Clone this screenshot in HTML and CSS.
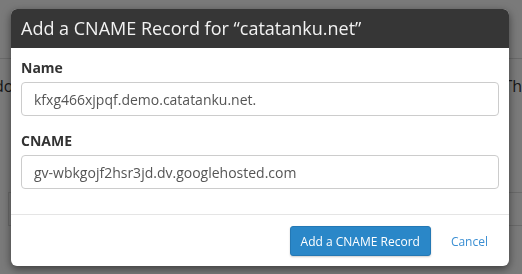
FILE: index.html
```html
<!DOCTYPE html>
<html>
  <head>
    <meta charset="utf-8">
    <title>Add a CNAME Record</title>
    <link rel="stylesheet" href="styles.css">
  </head>
  <body>
    <div class="page">
      <div class="page-top"></div>
      <div class="page-row">
        <span class="page-text left">do</span>
        <span class="page-text right">Th</span>
      </div>
      <div class="page-table"></div>
    </div>
    <div id="overlay"></div>
    <div id="modal">
      <div class="modal-header">
        <h2>Add a CNAME Record for “catatanku.net”</h2>
      </div>
      <div class="modal-body">
        <div class="form-group">
          <label for="name">Name</label>
          <input id="name" type="text" value="kfxg466xjpqf.demo.catatanku.net.">
        </div>
        <div class="form-group">
          <label for="cname">CNAME</label>
          <input id="cname" type="text" value="gv-wbkgojf2hsr3jd.dv.googlehosted.com">
        </div>
      </div>
      <div class="modal-footer">
        <button type="button" class="btn-primary">Add a CNAME Record</button>
        <button type="button" class="btn-link">Cancel</button>
      </div>
    </div>
  </body>
</html>
```

FILE: styles.css
```css
* {
  margin: 0;
  padding: 0;
  box-sizing: border-box;
}

body {
  background-color: white;
  color: #333;
  font-family: "Open Sans", "Liberation Sans", sans-serif;
  font-size: 14px;
  overflow: hidden;
}

.page {
  height: 274px;
}

.page-top {
  height: 59px;
  border-bottom: 1px solid #ddd;
}

.page-row {
  display: flex;
  justify-content: space-between;
  padding-top: 17px;
  font-size: 16px;
  line-height: 20px;
}

.page-text {
  color: #333;
}

.page-text.left {
  margin-left: -6px;
}

.page-table {
  margin: 96px 0 0 8px;
  height: 34px;
  border-top: 1px solid #ddd;
  border-bottom: 1px solid #ddd;
  border-left: 1px solid #ddd;
}

#overlay {
  background-color: black;
  opacity: 0.52;
  position: fixed;
  top: 0;
  left: 0;
  width: 100%;
  height: 100%;
}

#modal {
  background-color: white;
  border-radius: 6px;
  box-shadow: 0 3px 9px rgba(0, 0, 0, 0.5);
  position: absolute;
  top: 9px;
  left: 11px;
  width: 498px;
  overflow: hidden;
}

.modal-header {
  background-color: #363636;
  height: 39px;
  padding: 0 10px;
}

.modal-header h2 {
  color: #f2f2f2;
  font-size: 18px;
  font-weight: normal;
  line-height: 39px;
}

.modal-body {
  padding: 10px 10px 10px;
}

.form-group {
  margin-bottom: 15px;
}

.form-group label {
  display: block;
  font-weight: bold;
  line-height: 20px;
  margin-bottom: 4px;
}

.form-group input {
  display: block;
  width: 100%;
  height: 34px;
  padding: 0 12px;
  border: 1px solid #ccc;
  border-radius: 4px;
  color: #555;
  font-family: inherit;
  font-size: 14px;
}

.modal-footer {
  border-top: 1px solid #e5e5e5;
  display: flex;
  justify-content: flex-end;
  align-items: center;
  padding: 11px 9px 10px 10px;
}

.btn-primary {
  background-color: #2a87c8;
  border: 1px solid #2478b4;
  border-radius: 3px;
  box-shadow: 0 1px 2px rgba(0, 0, 0, 0.2);
  color: white;
  font-family: inherit;
  font-size: 12px;
  height: 30px;
  padding: 0 10px;
}

.btn-link {
  background: none;
  border: none;
  color: #3b8fd3;
  font-family: inherit;
  font-size: 12px;
  height: 30px;
  margin-left: 8px;
  padding: 0 12px;
}
```
